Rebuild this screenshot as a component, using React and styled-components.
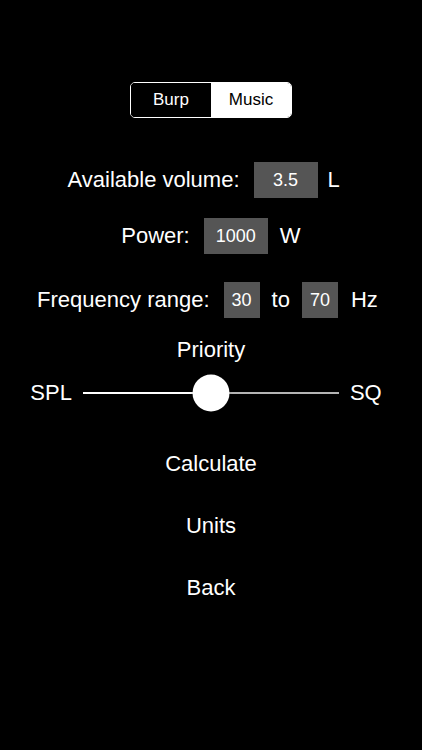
import React from "react";
import styled, { createGlobalStyle } from "styled-components";

const Global = createGlobalStyle`
  html, body { margin: 0; padding: 0; background: #000; }
  body { font-family: "Liberation Sans", Arial, Helvetica, sans-serif; }
`;

const Screen = styled.div`
  width: 422px;
  height: 750px;
  background: #000;
  color: #fff;
  display: flex;
  flex-direction: column;
  align-items: center;
  padding-top: 82px;
  box-sizing: border-box;
  overflow: hidden;
`;

const Segmented = styled.div`
  display: flex;
  height: 36px;
  border: 1px solid #fff;
  border-radius: 5px;
  overflow: hidden;
  box-sizing: border-box;
`;

const Segment = styled.div`
  width: ${(p) => p.$w}px;
  display: flex;
  align-items: center;
  justify-content: center;
  font-size: 17px;
  background: ${(p) => (p.$active ? "#fff" : "#000")};
  color: ${(p) => (p.$active ? "#000" : "#fff")};
`;

const Row = styled.div`
  display: flex;
  align-items: center;
  height: 36px;
  margin-top: ${(p) => p.$mt}px;
  font-size: 22px;
  margin-left: ${(p) => p.$ml || 0}px;
`;

const Label = styled.span`
  margin-right: 14px;
  white-space: nowrap;
`;

const Field = styled.div`
  width: ${(p) => p.$w}px;
  height: 36px;
  background: #555555;
  color: #fff;
  font-size: 18px;
  display: flex;
  align-items: center;
  justify-content: center;
`;

const Unit = styled.span`
  width: 30px;
  margin-left: ${(p) => p.$ml}px;
`;

const Joiner = styled.span`
  margin: 0 12px;
`;

const Heading = styled.div`
  margin-top: 19px;
  font-size: 22px;
  line-height: 26px;
`;

const SliderRow = styled.div`
  display: flex;
  align-items: center;
  height: 37px;
  margin-top: 11px;
  font-size: 22px;
  gap: 11px;
  margin-left: -10px;
`;

const Track = styled.div`
  position: relative;
  width: 256px;
  height: 2px;
  background: #b4b4b4;
`;

const Fill = styled.div`
  position: absolute;
  left: 0;
  top: 0;
  height: 2px;
  background: #fff;
`;

const Thumb = styled.div`
  position: absolute;
  top: 50%;
  width: 37px;
  height: 37px;
  border-radius: 50%;
  background: #fff;
  transform: translate(-50%, -50%);
  box-shadow: 0 1px 3px rgba(0, 0, 0, 0.3);
`;

const Actions = styled.div`
  display: flex;
  flex-direction: column;
  align-items: center;
  gap: 36px;
  margin-top: 40px;
`;

const ActionButton = styled.div`
  font-size: 22px;
  line-height: 26px;
  color: #fff;
`;

export default function App() {
  const value = 0.5;
  return (
    <>
      <Global />
      <Screen>
        <Segmented>
          <Segment $w={80}>Burp</Segment>
          <Segment $w={80} $active>
            Music
          </Segment>
        </Segmented>

        <Row $mt={44} $ml={3}>
          <Label>Available volume:</Label>
          <Field $w={64}>3.5</Field>
          <Unit $ml={10}>L</Unit>
        </Row>

        <Row $mt={20} $ml={9}>
          <Label>Power:</Label>
          <Field $w={64}>1000</Field>
          <Unit $ml={12}>W</Unit>
        </Row>

        <Row $mt={28} $ml={-4}>
          <Label>Frequency range:</Label>
          <Field $w={36}>30</Field>
          <Joiner>to</Joiner>
          <Field $w={36}>70</Field>
          <Unit $ml={13}>Hz</Unit>
        </Row>

        <Heading>Priority</Heading>

        <SliderRow>
          <span>SPL</span>
          <Track>
            <Fill style={{ width: `${value * 100}%` }} />
            <Thumb style={{ left: `${value * 100}%` }} />
          </Track>
          <span>SQ</span>
        </SliderRow>

        <Actions>
          <ActionButton>Calculate</ActionButton>
          <ActionButton>Units</ActionButton>
          <ActionButton>Back</ActionButton>
        </Actions>
      </Screen>
    </>
  );
}
